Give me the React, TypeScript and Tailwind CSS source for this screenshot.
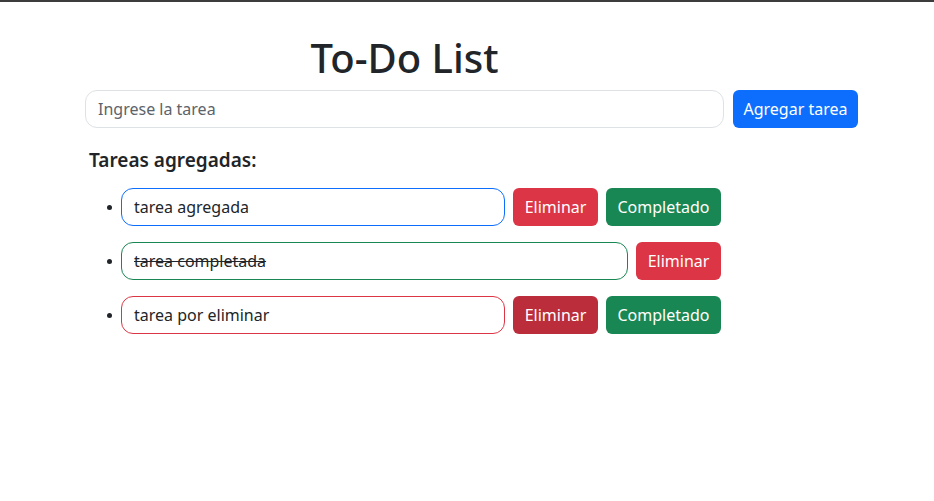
import React from "react";

const font = { fontFamily: '"Noto Sans", "Open Sans", sans-serif' };

function Row({ text, border, done, hover, showComplete }: { text: string; border: string; done?: boolean; hover?: boolean; showComplete: boolean }) {
  return (
    <li className="flex items-center">
      <span className="w-[16px] h-[38px] flex items-center"><span className="block w-[5px] h-[5px] rounded-full bg-[#212529] ml-[2px]" /></span>
      <div className="flex w-[600px] items-center gap-[8px]">
        <div className={`flex-1 h-[38px] rounded-[12px] border ${border} flex items-center px-[12px] text-[16px] text-[#212529] ${done ? "line-through" : ""}`}>{text}</div>
        <button className={`h-[38px] w-[85px] rounded-[6px] text-white text-[16px] ${hover ? "bg-[#bb2d3b]" : "bg-[#dc3545]"}`}>Eliminar</button>
        {showComplete && (
          <button className="h-[38px] w-[115px] rounded-[6px] text-white text-[16px] bg-[#198754]">Completado</button>
        )}
      </div>
    </li>
  );
}

export default function App() {
  return (
    <div className="min-h-[501px] bg-white border-t-2 border-[#3c3c3c]" style={font}>
      <div className="pl-[85px] w-[858px]">
        <h1 className="w-[639px] text-center text-[40px] font-medium text-[#212529] leading-[48px] pt-[32px]">To-Do List</h1>
        <div className="flex gap-[9px] mt-[8px]">
          <div className="w-[639px] h-[38px] rounded-[12px] border border-[#dee2e6] flex items-center px-[12px] text-[16px] text-[#5c636a]">Ingrese la tarea</div>
          <button className="w-[125px] h-[38px] rounded-[6px] bg-[#0d6efd] text-white text-[16px]">Agregar tarea</button>
        </div>
        <h5 className="pl-[4px] mt-[20px] text-[19px] font-semibold text-[#212529] leading-[24px]">Tareas agregadas:</h5>
        <ul className="pl-[20px] mt-[16px] flex flex-col gap-[16px]">
          <Row text="tarea agregada" border="border-[#0d6efd]" showComplete />
          <Row text="tarea completada" border="border-[#198754]" done showComplete={false} />
          <Row text="tarea por eliminar" border="border-[#dc3545]" hover showComplete />
        </ul>
      </div>
    </div>
  );
}
